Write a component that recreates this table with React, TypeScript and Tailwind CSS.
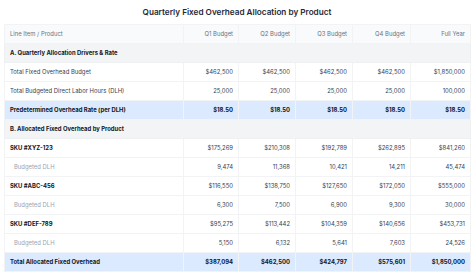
import React from "react";

type Row =
  | { kind: "section"; label: string }
  | { kind: "data"; label: string; vals: string[]; style?: "normal" | "bold" | "sub" | "rate" | "total" };

const rows: Row[] = [
  { kind: "section", label: "A. Quarterly Allocation Drivers & Rate" },
  { kind: "data", label: "Total Fixed Overhead Budget", vals: ["$462,500", "$462,500", "$462,500", "$462,500", "$1,850,000"] },
  { kind: "data", label: "Total Budgeted Direct Labor Hours (DLH)", vals: ["25,000", "25,000", "25,000", "25,000", "100,000"] },
  { kind: "data", label: "Predetermined Overhead Rate (per DLH)", vals: ["$18.50", "$18.50", "$18.50", "$18.50", "$18.50"], style: "rate" },
  { kind: "section", label: "B. Allocated Fixed Overhead by Product" },
  { kind: "data", label: "SKU #XYZ-123", vals: ["$175,269", "$210,308", "$192,789", "$262,895", "$841,260"], style: "bold" },
  { kind: "data", label: "Budgeted DLH", vals: ["9,474", "11,368", "10,421", "14,211", "45,474"], style: "sub" },
  { kind: "data", label: "SKU #ABC-456", vals: ["$116,550", "$138,750", "$127,650", "$172,050", "$555,000"], style: "bold" },
  { kind: "data", label: "Budgeted DLH", vals: ["6,300", "7,500", "6,900", "9,300", "30,000"], style: "sub" },
  { kind: "data", label: "SKU #DEF-789", vals: ["$95,275", "$113,442", "$104,359", "$140,656", "$453,731"], style: "bold" },
  { kind: "data", label: "Budgeted DLH", vals: ["5,150", "6,132", "5,641", "7,603", "24,526"], style: "sub" },
  { kind: "data", label: "Total Allocated Fixed Overhead", vals: ["$387,094", "$462,500", "$424,797", "$575,601", "$1,850,000"], style: "total" },
];

const headers = ["Q1 Budget", "Q2 Budget", "Q3 Budget", "Q4 Budget", "Full Year"];

export default function App() {
  return (
    <div
      className="w-[474px] h-[276px] bg-white px-[4px] pt-[5px] overflow-hidden"
      style={{ fontFamily: "Inter, 'Noto Sans', sans-serif" }}
    >
      <h1 className="text-center text-[8.2px] font-semibold text-[#1f2937] leading-[14px] mb-[5px]">
        Quarterly Fixed Overhead Allocation by Product
      </h1>
      <table className="w-[466px] border-collapse table-fixed text-[5.9px]">
        <colgroup>
          <col className="w-[179px]" />
          <col className="w-[55px]" />
          <col className="w-[57px]" />
          <col className="w-[57px]" />
          <col className="w-[58px]" />
          <col className="w-[60px]" />
        </colgroup>
        <thead>
          <tr className="h-[19px] bg-[#f8fafc] text-[#6b7280]">
            <th className="text-left font-normal px-[5px] border border-[#f1f3f5]">Line Item / Product</th>
            {headers.map((h) => (
              <th key={h} className="text-right font-normal px-[5px] border border-[#f1f3f5]">
                {h}
              </th>
            ))}
          </tr>
        </thead>
        <tbody>
          {rows.map((r, i) => {
            if (r.kind === "section") {
              return (
                <tr key={i} className="h-[19px] bg-[#f3f4f6]">
                  <td colSpan={6} className="px-[5px] font-bold text-[#111827] border border-[#eef0f2]">
                    {r.label}
                  </td>
                </tr>
              );
            }
            const st = r.style ?? "normal";
            const rowBg = st === "rate" || st === "total" ? "bg-[#dbeafe]" : "bg-white";
            const labelCls =
              st === "sub"
                ? "pl-[9px] text-[#9ca3af]"
                : st === "normal"
                ? "pl-[5px] text-[#374151]"
                : "pl-[5px] font-bold text-[#111827]";
            const valCls =
              st === "rate" || st === "total" ? "font-bold text-[#111827]" : "text-[#374151]";
            return (
              <tr key={i} className={`h-[19px] ${rowBg}`}>
                <td className={`${labelCls} pr-[5px] border border-[#f1f3f5]`}>{r.label}</td>
                {r.vals.map((v, j) => (
                  <td key={j} className={`text-right px-[5px] border border-[#f1f3f5] ${valCls}`}>
                    {v}
                  </td>
                ))}
              </tr>
            );
          })}
        </tbody>
      </table>
    </div>
  );
}
